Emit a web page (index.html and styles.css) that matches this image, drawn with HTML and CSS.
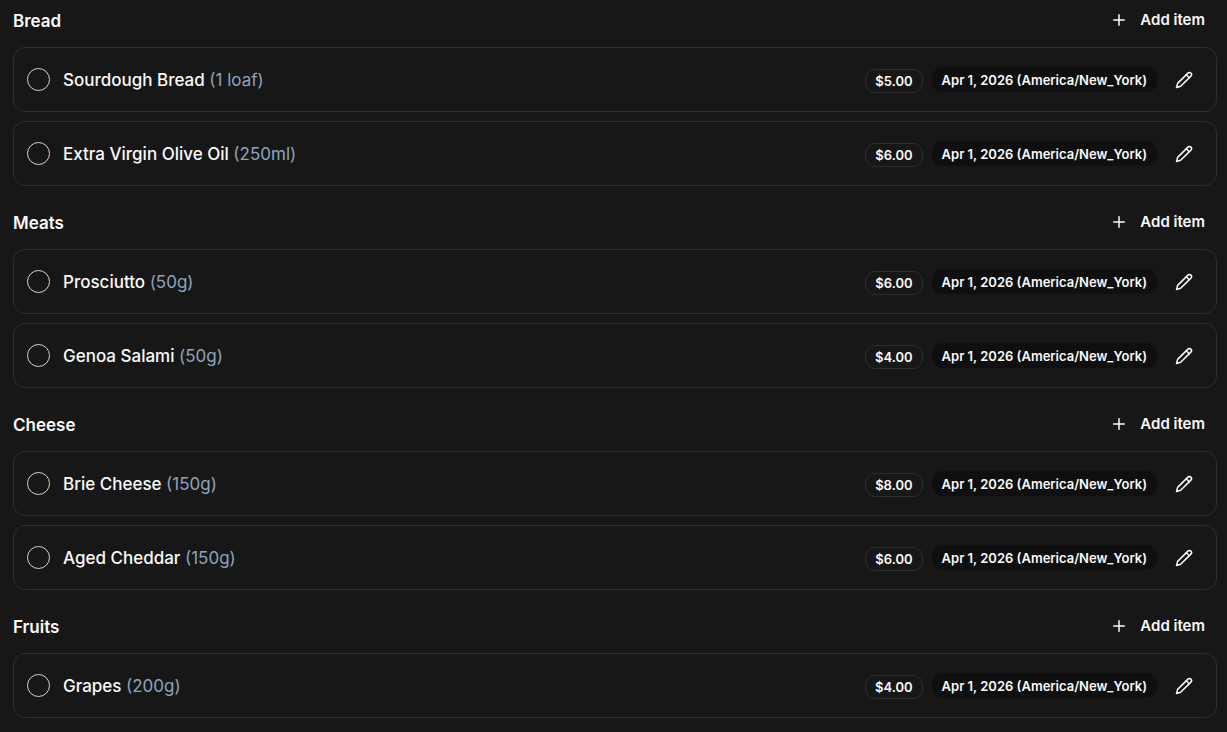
FILE: index.html
```html
<!DOCTYPE html>
<html lang="en">
<head>
<meta charset="utf-8">
<meta name="viewport" content="width=device-width, initial-scale=1">
<title>Shopping list</title>
<link rel="stylesheet" href="styles.css">
</head>
<body>
<svg class="sprite" aria-hidden="true">
  <symbol id="plus" viewBox="0 0 24 24"><path d="M12 5v14M5 12h14"/></symbol>
  <symbol id="pencil" viewBox="0 0 24 24"><path d="M17.2 2.8a2.8 2.8 0 0 1 4 4L7.5 20.4 2 22l1.5-5.5Z"/><path d="m15 5 4 4"/></symbol>
</svg>
<main class="list">
  <section class="group">
    <header class="group-header"><h2 class="group-title">Bread</h2><button class="add" type="button"><svg class="icon-plus"><use href="#plus"/></svg>Add item</button></header>
    <ul class="items">
      <li class="item"><input class="check" type="checkbox" id="i1"><label class="name" for="i1">Sourdough Bread <span class="qty">(1 loaf)</span></label><span class="price">$5.00</span><span class="date">Apr 1, 2026 (America/New_York)</span><button class="edit" type="button" aria-label="Edit"><svg class="icon-pencil"><use href="#pencil"/></svg></button></li>
      <li class="item"><input class="check" type="checkbox" id="i2"><label class="name" for="i2">Extra Virgin Olive Oil <span class="qty">(250ml)</span></label><span class="price">$6.00</span><span class="date">Apr 1, 2026 (America/New_York)</span><button class="edit" type="button" aria-label="Edit"><svg class="icon-pencil"><use href="#pencil"/></svg></button></li>
    </ul>
  </section>
  <section class="group">
    <header class="group-header"><h2 class="group-title">Meats</h2><button class="add" type="button"><svg class="icon-plus"><use href="#plus"/></svg>Add item</button></header>
    <ul class="items">
      <li class="item"><input class="check" type="checkbox" id="i3"><label class="name" for="i3">Prosciutto <span class="qty">(50g)</span></label><span class="price">$6.00</span><span class="date">Apr 1, 2026 (America/New_York)</span><button class="edit" type="button" aria-label="Edit"><svg class="icon-pencil"><use href="#pencil"/></svg></button></li>
      <li class="item"><input class="check" type="checkbox" id="i4"><label class="name" for="i4">Genoa Salami <span class="qty">(50g)</span></label><span class="price">$4.00</span><span class="date">Apr 1, 2026 (America/New_York)</span><button class="edit" type="button" aria-label="Edit"><svg class="icon-pencil"><use href="#pencil"/></svg></button></li>
    </ul>
  </section>
  <section class="group">
    <header class="group-header"><h2 class="group-title">Cheese</h2><button class="add" type="button"><svg class="icon-plus"><use href="#plus"/></svg>Add item</button></header>
    <ul class="items">
      <li class="item"><input class="check" type="checkbox" id="i5"><label class="name" for="i5">Brie Cheese <span class="qty">(150g)</span></label><span class="price">$8.00</span><span class="date">Apr 1, 2026 (America/New_York)</span><button class="edit" type="button" aria-label="Edit"><svg class="icon-pencil"><use href="#pencil"/></svg></button></li>
      <li class="item"><input class="check" type="checkbox" id="i6"><label class="name" for="i6">Aged Cheddar <span class="qty">(150g)</span></label><span class="price">$6.00</span><span class="date">Apr 1, 2026 (America/New_York)</span><button class="edit" type="button" aria-label="Edit"><svg class="icon-pencil"><use href="#pencil"/></svg></button></li>
    </ul>
  </section>
  <section class="group">
    <header class="group-header"><h2 class="group-title">Fruits</h2><button class="add" type="button"><svg class="icon-plus"><use href="#plus"/></svg>Add item</button></header>
    <ul class="items">
      <li class="item"><input class="check" type="checkbox" id="i7"><label class="name" for="i7">Grapes <span class="qty">(200g)</span></label><span class="price">$4.00</span><span class="date">Apr 1, 2026 (America/New_York)</span><button class="edit" type="button" aria-label="Edit"><svg class="icon-pencil"><use href="#pencil"/></svg></button></li>
    </ul>
  </section>
</main>
</body>
</html>
```
FILE: styles.css
```css
* { box-sizing: border-box; }
body { margin: 0; background: #171717; color: #fafafa; font-family: Inter, "Liberation Sans", sans-serif; }
.sprite { display: none; }
.list { display: flex; flex-direction: column; gap: 16px; padding: 0 10px 14px 13px; }
.group-header { display: flex; align-items: flex-start; justify-content: space-between; padding: 8px 12px 13px 0; }
.group-title { margin: 0; font-size: 17px; line-height: 26px; font-weight: 600; }
.add { display: flex; align-items: center; gap: 12px; padding: 0; border: 0; background: none; color: inherit; font: 600 15px/24px Inter, "Liberation Sans", sans-serif; }
.items { display: flex; flex-direction: column; gap: 9px; margin: 0; padding: 0; list-style: none; }
.item { display: flex; align-items: center; min-height: 65px; padding: 0 23px 0 13px; border: 1px solid #2e2e2e; border-radius: 12px; }
.check { appearance: none; width: 23px; height: 23px; margin: 0; border: 1px solid #cbd5e1; border-radius: 50%; }
.name { flex: 1; margin-left: 13px; font-size: 17px; line-height: 24px; font-weight: 500; }
.qty { color: #8ea3bf; font-weight: 400; }
.price, .date { font-size: 13px; font-weight: 600; border-radius: 10px; white-space: nowrap; }
.price { margin-top: 3px; padding: 3px 9px; border: 1px solid #2e2e2e; line-height: 16px; }
.date { margin-left: 9px; padding: 6px 10px 4px; background: #0f0f0f; line-height: 15px; }
.edit { display: flex; margin-left: 18px; padding: 0; border: 0; background: none; color: inherit; }
.icon-plus, .icon-pencil { width: 18px; height: 18px; fill: none; stroke: currentColor; stroke-width: 2; stroke-linecap: round; stroke-linejoin: round; }
```
